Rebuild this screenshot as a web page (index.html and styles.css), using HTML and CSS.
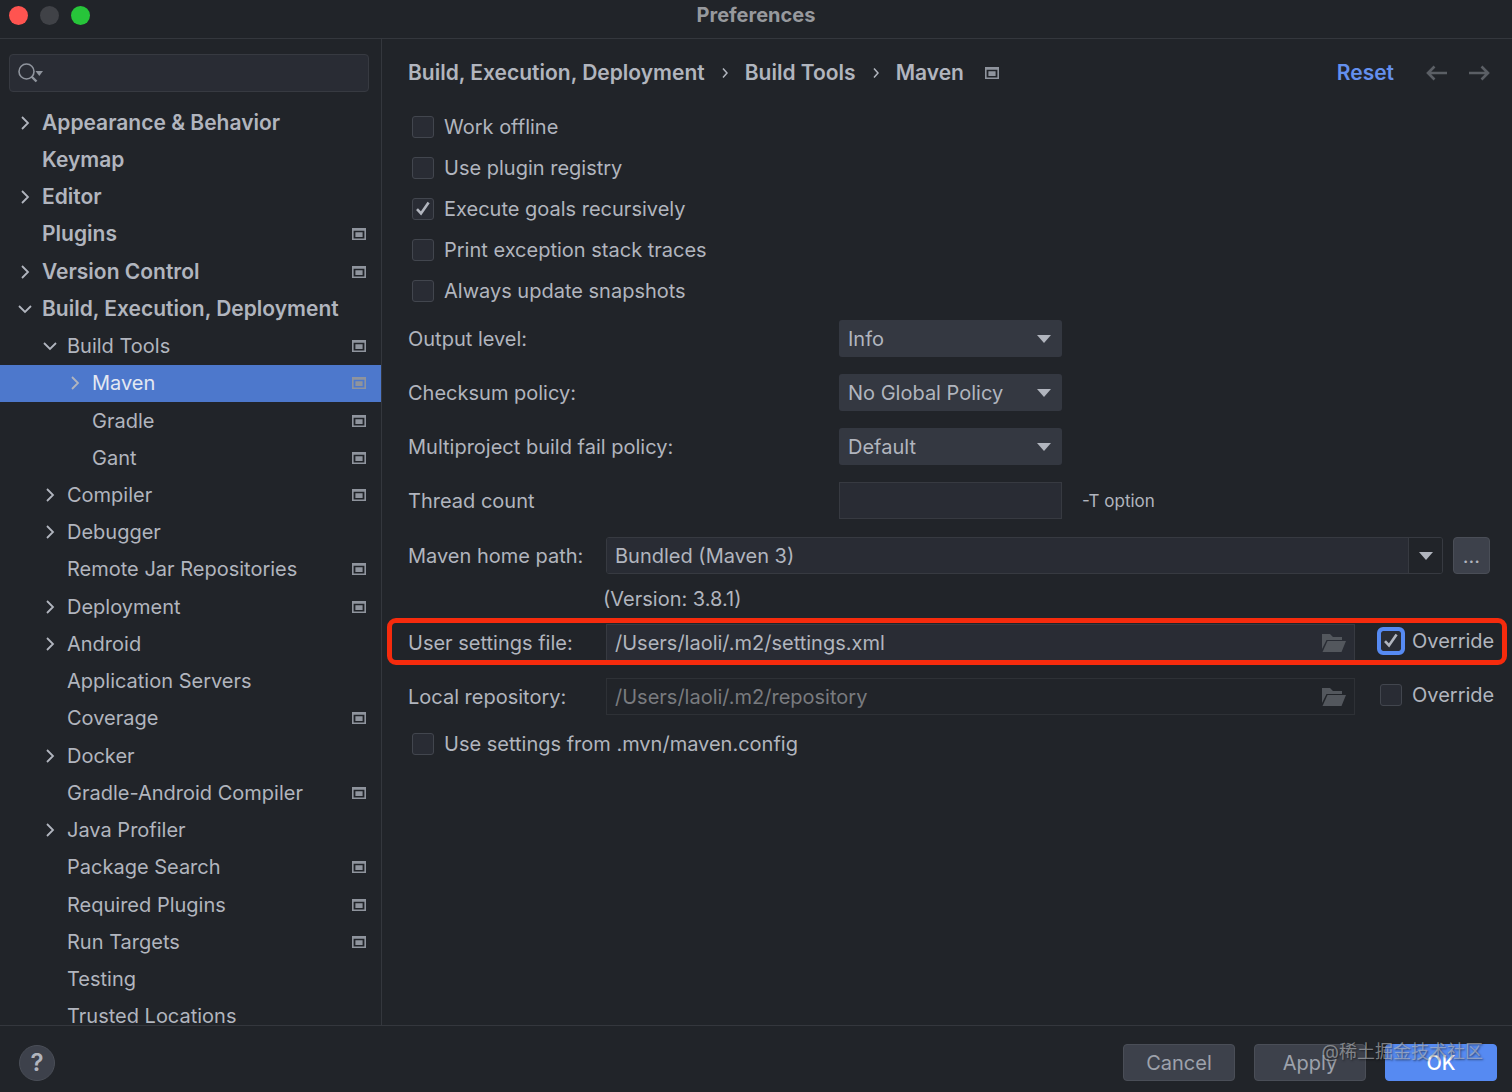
FILE: index.html
```html
<!DOCTYPE html>
<html lang="en">
<head>
<meta charset="utf-8">
<meta name="viewport" content="width=device-width, initial-scale=1">
<title>Preferences</title>
<link rel="stylesheet" href="styles.css">
</head>
<body>
<svg class="sprite" aria-hidden="true">
  <symbol id="right" viewBox="0 0 16 16"><path d="M5 2l6 6-6 6" fill="none" stroke="currentColor" stroke-width="1.8"/></symbol>
  <symbol id="down" viewBox="0 0 16 16"><path d="M2 5l6 6 6-6" fill="none" stroke="currentColor" stroke-width="1.8"/></symbol>
  <symbol id="project" viewBox="0 0 14 12"><path fill-rule="evenodd" d="M0 0h14v12H0zM1.6 2.8v7.8h10.8V2.8zM3.4 4.3h7.2v4.7H3.4z" fill="currentColor"/></symbol>
  <symbol id="tick" viewBox="0 0 22 22"><path d="M5 11.2l4 4.3 7.6-11" fill="none" stroke="currentColor" stroke-width="2.6"/></symbol>
  <symbol id="folder" viewBox="0 0 24 18"><path d="M0 15V0h8l3 3h9v3H4.500z" fill="currentColor"/><path d="M5.500 7H24l-4.500 11H0.500z" fill="currentColor"/></symbol>
  <symbol id="triangle" viewBox="0 0 14 8"><path d="M0 0h14L7 8z" fill="currentColor"/></symbol>
</svg>

<header class="titlebar">
  <div class="lights"><span class="light red"></span><span class="light gray"></span><span class="light green"></span></div>
  <h1 class="title">Preferences</h1>
</header>

<div class="body">
  <aside class="sidebar">
    <div class="search">
      <svg class="search-icon" viewBox="0 0 26 20" aria-hidden="true"><circle cx="8.500" cy="8.500" r="7.500" fill="none" stroke="currentColor" stroke-width="1.6"/><path d="M13.500 13.500l5 5" stroke="currentColor" stroke-width="2.4"/><path d="M17.500 8h7.500l-3.700 5z" fill="currentColor"/></svg>
      <input class="search-input" type="text" aria-label="Search settings">
    </div>
    <nav class="tree-nav" aria-label="Settings">
      <ul class="tree">
        <li><a href="#" class="row top"><svg class="arrow"><use href="#right"/></svg><span class="name">Appearance &amp; Behavior</span></a></li>
        <li><a href="#" class="row top"><span class="arrow"></span><span class="name">Keymap</span></a></li>
        <li><a href="#" class="row top"><svg class="arrow"><use href="#right"/></svg><span class="name">Editor</span></a></li>
        <li><a href="#" class="row top"><span class="arrow"></span><span class="name">Plugins</span><svg class="badge"><use href="#project"/></svg></a></li>
        <li><a href="#" class="row top"><svg class="arrow"><use href="#right"/></svg><span class="name">Version Control</span><svg class="badge"><use href="#project"/></svg></a></li>
        <li><a href="#" class="row top"><svg class="arrow"><use href="#down"/></svg><span class="name">Build, Execution, Deployment</span></a></li>
        <li><a href="#" class="row sub"><svg class="arrow"><use href="#down"/></svg><span class="name">Build Tools</span><svg class="badge"><use href="#project"/></svg></a></li>
        <li><a href="#" class="row leaf selected" aria-current="page"><svg class="arrow"><use href="#right"/></svg><span class="name">Maven</span><svg class="badge"><use href="#project"/></svg></a></li>
        <li><a href="#" class="row leaf"><span class="arrow"></span><span class="name">Gradle</span><svg class="badge"><use href="#project"/></svg></a></li>
        <li><a href="#" class="row leaf"><span class="arrow"></span><span class="name">Gant</span><svg class="badge"><use href="#project"/></svg></a></li>
        <li><a href="#" class="row sub"><svg class="arrow"><use href="#right"/></svg><span class="name">Compiler</span><svg class="badge"><use href="#project"/></svg></a></li>
        <li><a href="#" class="row sub"><svg class="arrow"><use href="#right"/></svg><span class="name">Debugger</span></a></li>
        <li><a href="#" class="row sub"><span class="arrow"></span><span class="name">Remote Jar Repositories</span><svg class="badge"><use href="#project"/></svg></a></li>
        <li><a href="#" class="row sub"><svg class="arrow"><use href="#right"/></svg><span class="name">Deployment</span><svg class="badge"><use href="#project"/></svg></a></li>
        <li><a href="#" class="row sub"><svg class="arrow"><use href="#right"/></svg><span class="name">Android</span></a></li>
        <li><a href="#" class="row sub"><span class="arrow"></span><span class="name">Application Servers</span></a></li>
        <li><a href="#" class="row sub"><span class="arrow"></span><span class="name">Coverage</span><svg class="badge"><use href="#project"/></svg></a></li>
        <li><a href="#" class="row sub"><svg class="arrow"><use href="#right"/></svg><span class="name">Docker</span></a></li>
        <li><a href="#" class="row sub"><span class="arrow"></span><span class="name">Gradle-Android Compiler</span><svg class="badge"><use href="#project"/></svg></a></li>
        <li><a href="#" class="row sub"><svg class="arrow"><use href="#right"/></svg><span class="name">Java Profiler</span></a></li>
        <li><a href="#" class="row sub"><span class="arrow"></span><span class="name">Package Search</span><svg class="badge"><use href="#project"/></svg></a></li>
        <li><a href="#" class="row sub"><span class="arrow"></span><span class="name">Required Plugins</span><svg class="badge"><use href="#project"/></svg></a></li>
        <li><a href="#" class="row sub"><span class="arrow"></span><span class="name">Run Targets</span><svg class="badge"><use href="#project"/></svg></a></li>
        <li><a href="#" class="row sub"><span class="arrow"></span><span class="name">Testing</span></a></li>
        <li><a href="#" class="row sub"><span class="arrow"></span><span class="name">Trusted Locations</span></a></li>
      </ul>
    </nav>
  </aside>

  <main class="main">
    <div class="page-head">
      <h2 class="crumbs">
        <span>Build, Execution, Deployment</span>
        <svg class="crumb-sep" viewBox="0 0 6 12" aria-hidden="true"><path d="M1 1.500l4 4.500-4 4.500" fill="none" stroke="currentColor" stroke-width="1.5"/></svg>
        <span>Build Tools</span>
        <svg class="crumb-sep" viewBox="0 0 6 12" aria-hidden="true"><path d="M1 1.500l4 4.500-4 4.500" fill="none" stroke="currentColor" stroke-width="1.5"/></svg>
        <span>Maven</span>
        <svg class="badge crumb-badge"><use href="#project"/></svg>
      </h2>
      <a href="#" class="reset">Reset</a>
      <button type="button" class="nav-btn" aria-label="Back"><svg viewBox="0 0 22 16"><path d="M21 8H2M8.500 1.500L2 8l6.500 6.500" fill="none" stroke="currentColor" stroke-width="2.6"/></svg></button>
      <button type="button" class="nav-btn" aria-label="Forward"><svg viewBox="0 0 22 16"><path d="M1 8h19M13.500 1.500L20 8l-6.500 6.500" fill="none" stroke="currentColor" stroke-width="2.6"/></svg></button>
    </div>

    <div class="checks">
      <label class="check"><span class="box"><input type="checkbox"><svg><use href="#tick"/></svg></span>Work offline</label>
      <label class="check"><span class="box"><input type="checkbox"><svg><use href="#tick"/></svg></span>Use plugin registry</label>
      <label class="check"><span class="box"><input type="checkbox" checked><svg><use href="#tick"/></svg></span>Execute goals recursively</label>
      <label class="check"><span class="box"><input type="checkbox"><svg><use href="#tick"/></svg></span>Print exception stack traces</label>
      <label class="check"><span class="box"><input type="checkbox"><svg><use href="#tick"/></svg></span>Always update snapshots</label>
    </div>

    <div class="options">
      <label for="output">Output level:</label>
      <div class="select"><select id="output"><option>Info</option></select><svg><use href="#triangle"/></svg></div>
      <label for="checksum">Checksum policy:</label>
      <div class="select"><select id="checksum"><option>No Global Policy</option></select><svg><use href="#triangle"/></svg></div>
      <label for="fail">Multiproject build fail policy:</label>
      <div class="select"><select id="fail"><option>Default</option></select><svg><use href="#triangle"/></svg></div>
      <label for="threads">Thread count</label>
      <input id="threads" class="field" type="text">
      <span class="hint">-T option</span>
    </div>

    <div class="path-row home">
      <label for="home" class="path-label">Maven home path:</label>
      <div class="combo">
        <input id="home" type="text" value="Bundled (Maven 3)">
        <button type="button" aria-label="Show Maven versions"><svg><use href="#triangle"/></svg></button>
      </div>
      <button type="button" class="btn more" aria-label="Browse">...</button>
    </div>
    <p class="version">(Version: 3.8.1)</p>
    <div class="path-row highlighted">
      <label for="settings" class="path-label">User settings file:</label>
      <div class="file"><input id="settings" class="field" type="text" value="/Users/laoli/.m2/settings.xml"><svg><use href="#folder"/></svg></div>
      <label class="check override"><span class="box focused"><input type="checkbox" checked><svg><use href="#tick"/></svg></span>Override</label>
    </div>
    <div class="path-row repo">
      <label for="repo" class="path-label">Local repository:</label>
      <div class="file"><input id="repo" class="field" type="text" value="/Users/laoli/.m2/repository" disabled><svg><use href="#folder"/></svg></div>
      <label class="check override"><span class="box"><input type="checkbox"><svg><use href="#tick"/></svg></span>Override</label>
    </div>
    <div class="checks">
      <label class="check"><span class="box"><input type="checkbox"><svg><use href="#tick"/></svg></span>Use settings from .mvn/maven.config</label>
    </div>
  </main>
</div>

<footer class="footer">
  <button type="button" class="help" aria-label="Help">?</button>
  <div class="actions">
    <button type="button" class="btn">Cancel</button>
    <button type="button" class="btn">Apply</button>
    <button type="button" class="btn primary">OK</button>
  </div>
  <span class="watermark" lang="zh">@稀土掘金技术社区</span>
</footer>
</body>
</html>
```
FILE: styles.css
```css
:root {
  --bg: #212429;
  --line: #34373d;
  --field: #292c34;
  --field-line: #373a41;
  --button: #3d414b;
  --text: #b1b5be;
  --muted: #8f949d;
  --blue: #568af2;
}

* { box-sizing: border-box; }

body {
  margin: 0;
  min-height: 100vh;
  display: flex;
  flex-direction: column;
  background: var(--bg);
  color: var(--text);
  font: 20px/26px Inter, "Noto Sans CJK SC", sans-serif;
}

input, select, button { font: inherit; color: inherit; margin: 0; }
button { cursor: pointer; }
a { color: inherit; text-decoration: none; }
h1, h2, p, ul { margin: 0; padding: 0; }
ul { list-style: none; }
.sprite { display: none; }

/* Title bar */
.titlebar {
  height: 39px;
  padding: 0 9px 8px;
  display: grid;
  grid-template-columns: 1fr auto 1fr;
  align-items: center;
  border-bottom: 1px solid var(--line);
}
.lights { display: flex; gap: 12px; }
.light { width: 19px; height: 19px; border-radius: 50%; }
.red { background: #ff5450; }
.gray { background: #404247; }
.green { background: #27c53a; }
.title { font-size: 20px; font-weight: 700; color: #97999d; }

.body { flex: 1; display: flex; }

/* Settings tree */
.sidebar {
  width: 382px;
  flex: none;
  display: flex;
  flex-direction: column;
  border-right: 1px solid var(--line);
  overflow: hidden;
}
.search {
  height: 38px;
  margin: 15px 12px 12px 9px;
  padding-left: 8px;
  display: flex;
  align-items: center;
  background: var(--field);
  border: 1px solid var(--field-line);
  border-radius: 4px;
}
.search-icon { width: 26px; height: 20px; color: var(--muted); }
.search-input { flex: 1; min-width: 0; background: none; border: 0; outline: 0; }
.tree-nav { flex: 1; display: grid; margin-bottom: -10px; }
.tree { display: grid; grid-auto-rows: minmax(36px, 1fr); }
.row {
  height: 100%;
  padding: 0 15px 0 17px;
  display: flex;
  align-items: center;
  gap: 9px;
}
.top { font-size: 21px; font-weight: 600; }
.sub { padding-left: 42px; }
.leaf { padding-left: 67px; }
.arrow { width: 16px; height: 16px; flex: none; }
.name { flex: 1; white-space: nowrap; }
.badge { width: 14px; height: 12px; flex: none; color: var(--muted); }
.selected { background: #4d78cc; color: #e3e8f2; }
.selected .arrow { color: var(--text); }

/* Page */
.main { flex: 1; min-width: 0; padding: 15px 22px 0 26px; }
.page-head { height: 38px; display: flex; align-items: center; margin-bottom: 14px; }
.crumbs {
  flex: 1;
  display: flex;
  align-items: center;
  gap: 17px;
  font-size: 21px;
  font-weight: 600;
}
.crumb-sep { width: 6px; height: 12px; }
.crumb-badge { margin-left: 4px; }
.reset { font-size: 21px; font-weight: 600; color: #6490ee; margin-right: 32px; }
.nav-btn {
  display: flex;
  padding: 0;
  background: none;
  border: 0;
  color: #5b5f65;
}
.nav-btn + .nav-btn { margin-left: 20px; }
.nav-btn svg { width: 22px; height: 16px; }

.checks { padding-left: 4px; }
.check { height: 41px; display: flex; align-items: center; gap: 10px; }
.box { display: grid; width: 22px; height: 22px; flex: none; }
.box > * { grid-area: 1 / 1; width: 22px; height: 22px; }
.box input {
  appearance: none;
  background: var(--field);
  border: 1px solid #42464e;
  border-radius: 3px;
}
.box svg { visibility: hidden; pointer-events: none; }
.box input:checked + svg { visibility: visible; }
.focused input { outline: 4px solid var(--blue); outline-offset: -1px; border-color: var(--blue); }

.options {
  margin: 9px 0 18px;
  display: grid;
  grid-template-columns: 431px 223px auto;
  grid-auto-rows: 37px;
  row-gap: 17px;
  align-items: center;
  justify-content: start;
}
.options label { grid-column: 1; }
.select { display: grid; align-items: center; }
.select > * { grid-area: 1 / 1; }
.select select {
  appearance: none;
  width: 100%;
  height: 37px;
  padding: 0 36px 0 9px;
  background: #343841;
  border: 0;
  border-radius: 3px;
}
.select svg { justify-self: end; width: 14px; height: 8px; margin-right: 11px; pointer-events: none; }
.field {
  width: 100%;
  height: 37px;
  padding: 0 8px;
  background: var(--field);
  border: 1px solid var(--field-line);
}
.hint { font-size: 17px; margin-left: 20px; }

.path-row { display: flex; align-items: center; height: 37px; }
.path-label { width: 198px; flex: none; }
.combo {
  flex: 1;
  height: 37px;
  display: flex;
  border: 1px solid var(--field-line);
  border-radius: 3px;
  overflow: hidden;
}
.combo input { flex: 1; min-width: 0; padding: 0 8px; background: var(--field); border: 0; }
.combo button {
  width: 34px;
  padding: 0;
  display: grid;
  place-items: center;
  background: var(--bg);
  border: 0;
  border-left: 1px solid var(--field-line);
}
.combo svg { width: 14px; height: 8px; }
.btn {
  width: 112px;
  height: 37px;
  padding: 0;
  background: var(--button);
  border: 1px solid #4a4e57;
  border-radius: 4px;
  color: #9da2ac;
}
.more { width: 37px; margin-left: 10px; color: var(--text); }
.version { height: 50px; padding: 12px 0 0 195px; }
.file { flex: 1; display: grid; align-items: center; }
.file > * { grid-area: 1 / 1; }
.file .field { padding-right: 40px; }
.file svg { justify-self: end; width: 24px; height: 18px; margin-right: 9px; color: #53575d; }
.field:disabled { background: none; border-color: #2e3136; color: #797b7f; }
.override { width: 139px; height: 34px; align-self: flex-start; padding-left: 25px; margin-right: -4px; }
.highlighted { position: relative; }
.highlighted::after {
  content: "";
  position: absolute;
  inset: -6px -17px -4px -21px;
  border: 5px solid #f62b0d;
  border-radius: 9px;
  pointer-events: none;
}
.repo { margin: 17px 0 8px; }

/* Footer */
.footer {
  position: relative;
  height: 67px;
  padding: 7px 15px 0 19px;
  display: flex;
  align-items: center;
  justify-content: space-between;
  background: var(--bg);
  border-top: 1px solid var(--line);
}
.help {
  width: 36px;
  height: 36px;
  padding: 0;
  border: 1px solid #4a4e57;
  border-radius: 50%;
  background: var(--button);
  font-size: 24px;
  font-weight: 600;
}
.actions { display: flex; gap: 19px; }
.primary { background: var(--blue); border-color: var(--blue); color: #fff; font-weight: 500; }
.watermark {
  position: absolute;
  right: 29px;
  top: 13px;
  font-size: 18px;
  color: rgba(190, 192, 196, 0.6);
  text-shadow: 1px 1px 2px rgba(0, 0, 0, 0.5);
  pointer-events: none;
}
```
